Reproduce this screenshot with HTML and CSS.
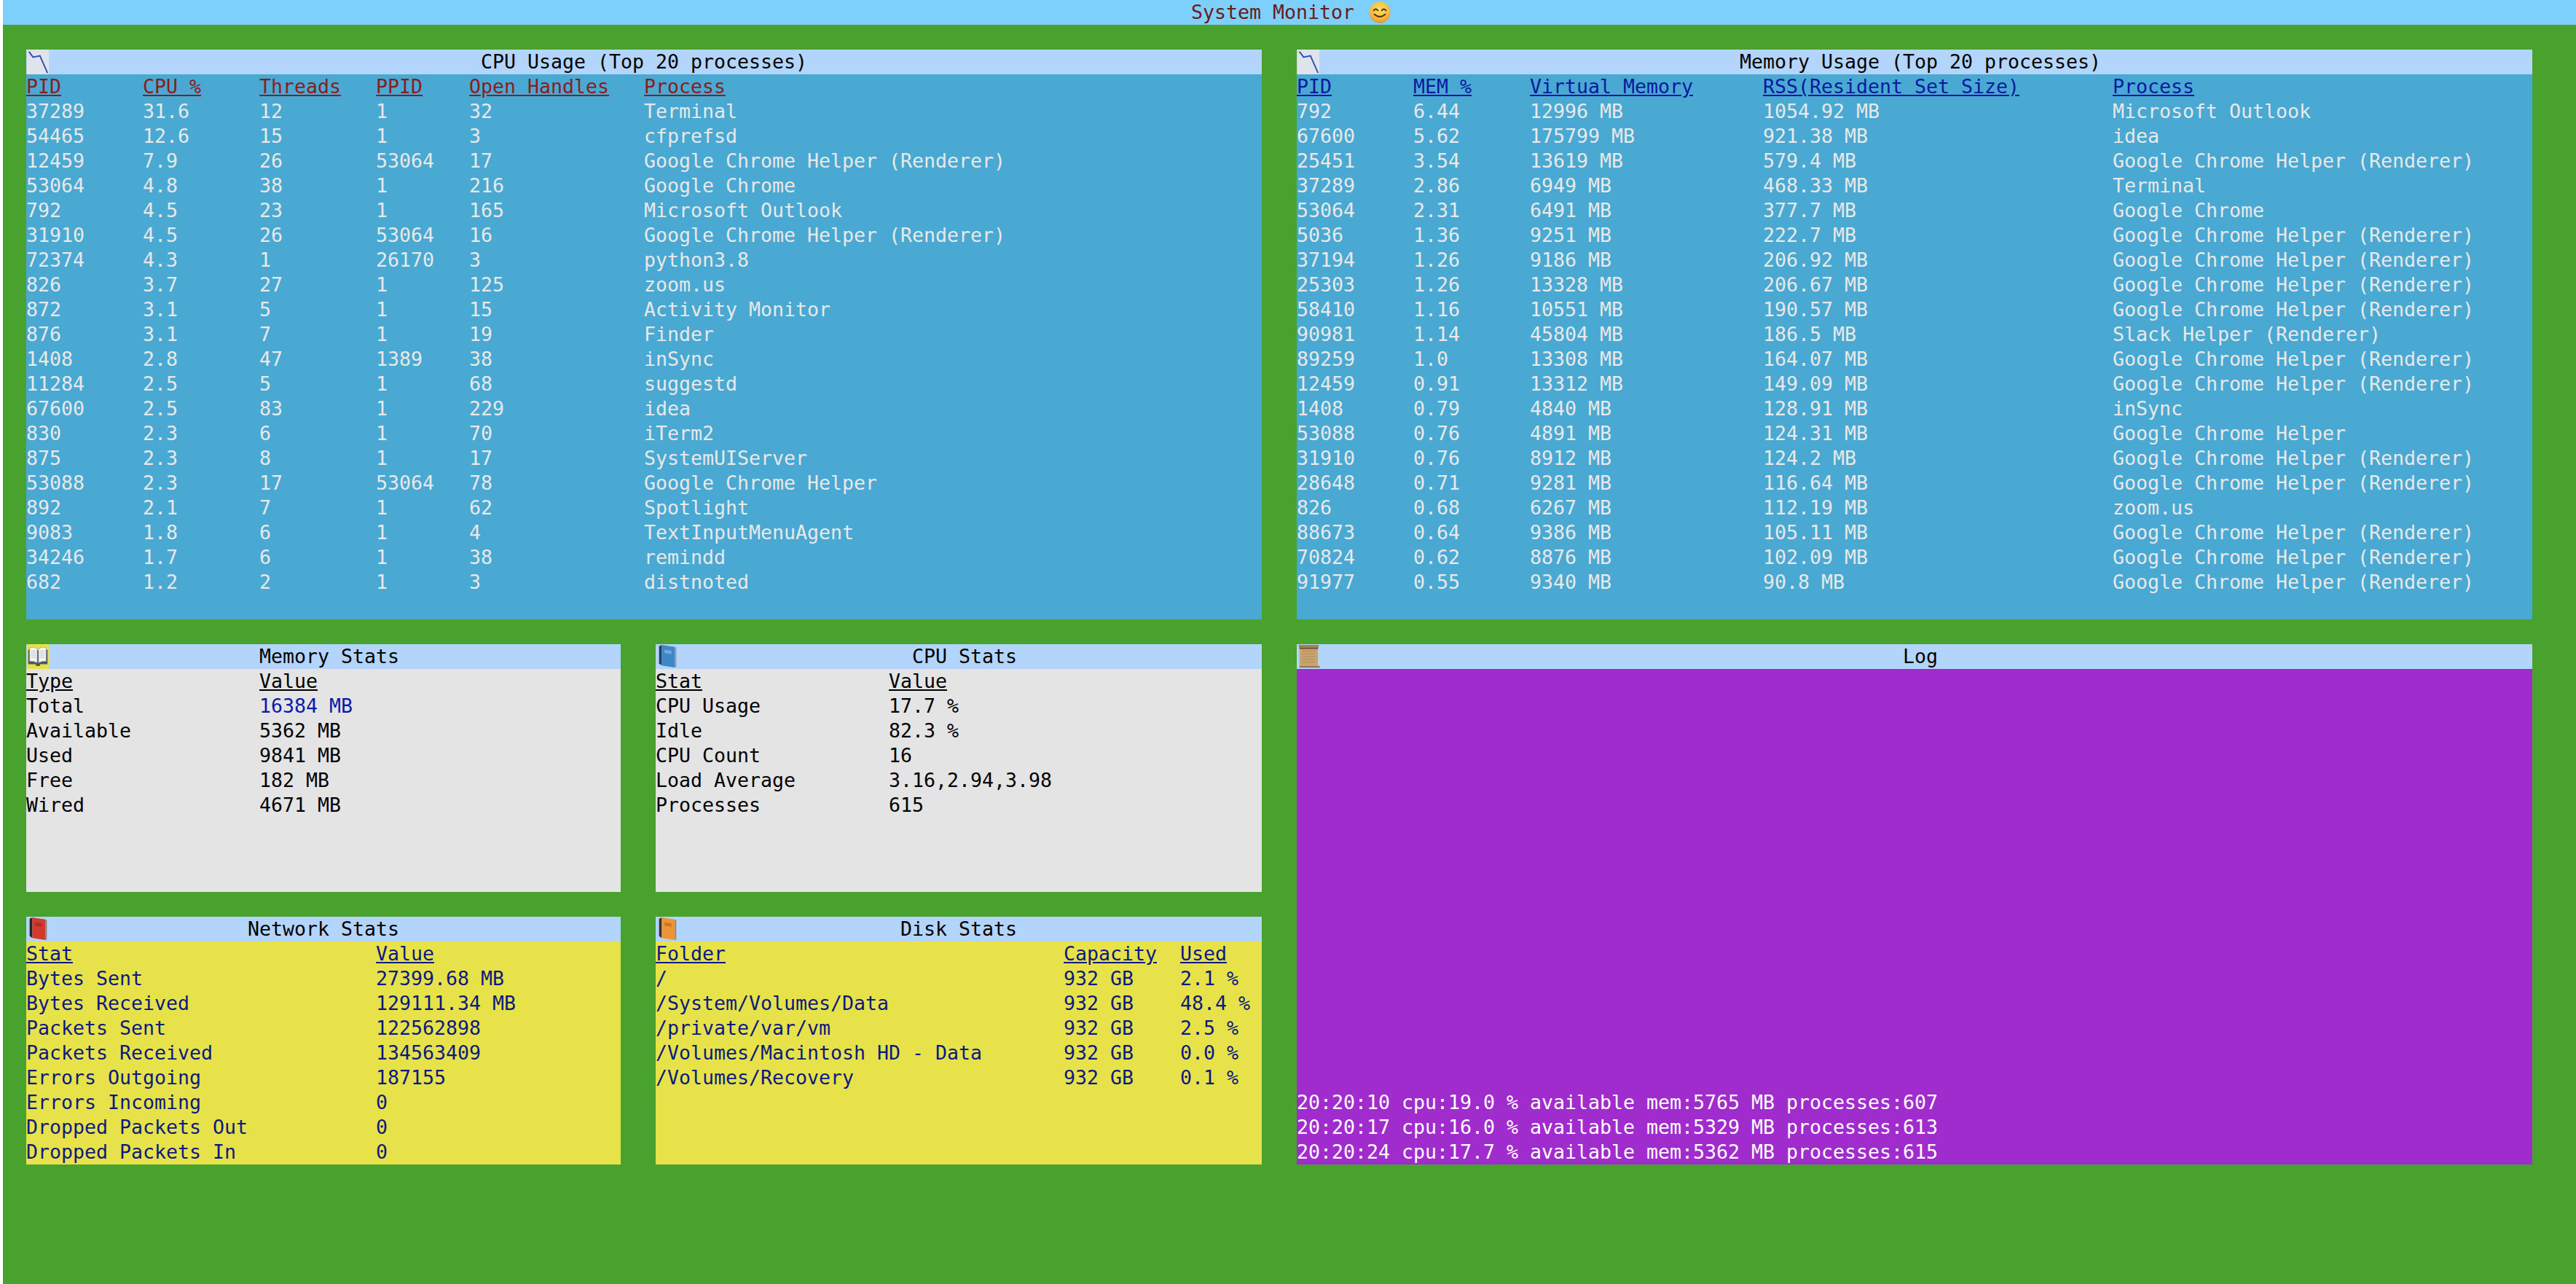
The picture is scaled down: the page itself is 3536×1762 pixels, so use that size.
FILE: index.html
```html
<!DOCTYPE html>
<html lang="en">

<head>
    <meta charset="UTF-8">
    <meta name="viewport" content="width=device-width, initial-scale=1.0">
    <title>System Monitor</title>
    <link rel="stylesheet" href="styles.css">
</head>

<body>
    <div class="screen">

        <header class="titlebar">
            <span>System Monitor</span>
            <svg class="smiley" viewBox="0 0 30 30">
                <defs>
                    <radialGradient id="face" cx="50%" cy="35%" r="70%">
                        <stop offset="0" stop-color="#fde36a" />
                        <stop offset="0.65" stop-color="#f8b83c" />
                        <stop offset="1" stop-color="#e08a22" />
                    </radialGradient>
                </defs>
                <circle cx="15" cy="15" r="14.5" fill="url(#face)" />
                <path d="M6.5 12.5q3-4 6 0M17.5 12.5q3-4 6 0" fill="none" stroke="#5b3410" stroke-width="1.8" stroke-linecap="round" />
                <path d="M7.5 17.5q7.500 7 15 0" fill="none" stroke="#5b3410" stroke-width="1.8" stroke-linecap="round" />
            </svg>
        </header>

        <main class="dash">

            <!-- CPU usage -->
            <section class="panel panel-cpu panel-blue">
                <h2 class="panel-title">
                    <svg class="icon" viewBox="0 0 32 36">
                        <rect x="0" y="0" width="32" height="36" fill="#dfe4ec" />
                        <path d="M3 3l6 8 10-2 11 25" fill="none" stroke="#2a4fb0" stroke-width="2" />
                    </svg>
                    CPU Usage (Top 20 processes)
                </h2>
                <table class="tbl tbl-red">
                    <colgroup>
                        <col class="w160"><col class="w160"><col class="w160"><col class="w128"><col class="w240"><col>
                    </colgroup>
                    <thead>
                        <tr><th>PID</th><th>CPU %</th><th>Threads</th><th>PPID</th><th>Open Handles</th><th>Process</th></tr>
                    </thead>
                    <tbody>
                        <tr><td>37289</td><td>31.6</td><td>12</td><td>1</td><td>32</td><td>Terminal</td></tr>
                        <tr><td>54465</td><td>12.6</td><td>15</td><td>1</td><td>3</td><td>cfprefsd</td></tr>
                        <tr><td>12459</td><td>7.9</td><td>26</td><td>53064</td><td>17</td><td>Google Chrome Helper (Renderer)</td></tr>
                        <tr><td>53064</td><td>4.8</td><td>38</td><td>1</td><td>216</td><td>Google Chrome</td></tr>
                        <tr><td>792</td><td>4.5</td><td>23</td><td>1</td><td>165</td><td>Microsoft Outlook</td></tr>
                        <tr><td>31910</td><td>4.5</td><td>26</td><td>53064</td><td>16</td><td>Google Chrome Helper (Renderer)</td></tr>
                        <tr><td>72374</td><td>4.3</td><td>1</td><td>26170</td><td>3</td><td>python3.8</td></tr>
                        <tr><td>826</td><td>3.7</td><td>27</td><td>1</td><td>125</td><td>zoom.us</td></tr>
                        <tr><td>872</td><td>3.1</td><td>5</td><td>1</td><td>15</td><td>Activity Monitor</td></tr>
                        <tr><td>876</td><td>3.1</td><td>7</td><td>1</td><td>19</td><td>Finder</td></tr>
                        <tr><td>1408</td><td>2.8</td><td>47</td><td>1389</td><td>38</td><td>inSync</td></tr>
                        <tr><td>11284</td><td>2.5</td><td>5</td><td>1</td><td>68</td><td>suggestd</td></tr>
                        <tr><td>67600</td><td>2.5</td><td>83</td><td>1</td><td>229</td><td>idea</td></tr>
                        <tr><td>830</td><td>2.3</td><td>6</td><td>1</td><td>70</td><td>iTerm2</td></tr>
                        <tr><td>875</td><td>2.3</td><td>8</td><td>1</td><td>17</td><td>SystemUIServer</td></tr>
                        <tr><td>53088</td><td>2.3</td><td>17</td><td>53064</td><td>78</td><td>Google Chrome Helper</td></tr>
                        <tr><td>892</td><td>2.1</td><td>7</td><td>1</td><td>62</td><td>Spotlight</td></tr>
                        <tr><td>9083</td><td>1.8</td><td>6</td><td>1</td><td>4</td><td>TextInputMenuAgent</td></tr>
                        <tr><td>34246</td><td>1.7</td><td>6</td><td>1</td><td>38</td><td>remindd</td></tr>
                        <tr><td>682</td><td>1.2</td><td>2</td><td>1</td><td>3</td><td>distnoted</td></tr>
                    </tbody>
                </table>
            </section>

            <!-- memory usage -->
            <section class="panel panel-mem panel-blue">
                <h2 class="panel-title odd">
                    <svg class="icon" viewBox="0 0 32 36">
                        <rect x="0" y="0" width="32" height="36" fill="#dfe4ec" />
                        <path d="M3 3l6 8 10-2 11 25" fill="none" stroke="#2a4fb0" stroke-width="2" />
                    </svg>
                    Memory Usage (Top 20 processes)
                </h2>
                <table class="tbl tbl-navy">
                    <colgroup>
                        <col class="w160"><col class="w160"><col class="w320"><col class="w480"><col>
                    </colgroup>
                    <thead>
                        <tr><th>PID</th><th>MEM %</th><th>Virtual Memory</th><th>RSS(Resident Set Size)</th><th>Process</th></tr>
                    </thead>
                    <tbody>
                        <tr><td>792</td><td>6.44</td><td>12996 MB</td><td>1054.92 MB</td><td>Microsoft Outlook</td></tr>
                        <tr><td>67600</td><td>5.62</td><td>175799 MB</td><td>921.38 MB</td><td>idea</td></tr>
                        <tr><td>25451</td><td>3.54</td><td>13619 MB</td><td>579.4 MB</td><td>Google Chrome Helper (Renderer)</td></tr>
                        <tr><td>37289</td><td>2.86</td><td>6949 MB</td><td>468.33 MB</td><td>Terminal</td></tr>
                        <tr><td>53064</td><td>2.31</td><td>6491 MB</td><td>377.7 MB</td><td>Google Chrome</td></tr>
                        <tr><td>5036</td><td>1.36</td><td>9251 MB</td><td>222.7 MB</td><td>Google Chrome Helper (Renderer)</td></tr>
                        <tr><td>37194</td><td>1.26</td><td>9186 MB</td><td>206.92 MB</td><td>Google Chrome Helper (Renderer)</td></tr>
                        <tr><td>25303</td><td>1.26</td><td>13328 MB</td><td>206.67 MB</td><td>Google Chrome Helper (Renderer)</td></tr>
                        <tr><td>58410</td><td>1.16</td><td>10551 MB</td><td>190.57 MB</td><td>Google Chrome Helper (Renderer)</td></tr>
                        <tr><td>90981</td><td>1.14</td><td>45804 MB</td><td>186.5 MB</td><td>Slack Helper (Renderer)</td></tr>
                        <tr><td>89259</td><td>1.0</td><td>13308 MB</td><td>164.07 MB</td><td>Google Chrome Helper (Renderer)</td></tr>
                        <tr><td>12459</td><td>0.91</td><td>13312 MB</td><td>149.09 MB</td><td>Google Chrome Helper (Renderer)</td></tr>
                        <tr><td>1408</td><td>0.79</td><td>4840 MB</td><td>128.91 MB</td><td>inSync</td></tr>
                        <tr><td>53088</td><td>0.76</td><td>4891 MB</td><td>124.31 MB</td><td>Google Chrome Helper</td></tr>
                        <tr><td>31910</td><td>0.76</td><td>8912 MB</td><td>124.2 MB</td><td>Google Chrome Helper (Renderer)</td></tr>
                        <tr><td>28648</td><td>0.71</td><td>9281 MB</td><td>116.64 MB</td><td>Google Chrome Helper (Renderer)</td></tr>
                        <tr><td>826</td><td>0.68</td><td>6267 MB</td><td>112.19 MB</td><td>zoom.us</td></tr>
                        <tr><td>88673</td><td>0.64</td><td>9386 MB</td><td>105.11 MB</td><td>Google Chrome Helper (Renderer)</td></tr>
                        <tr><td>70824</td><td>0.62</td><td>8876 MB</td><td>102.09 MB</td><td>Google Chrome Helper (Renderer)</td></tr>
                        <tr><td>91977</td><td>0.55</td><td>9340 MB</td><td>90.8 MB</td><td>Google Chrome Helper (Renderer)</td></tr>
                    </tbody>
                </table>
            </section>

            <!-- memory stats -->
            <section class="panel panel-gray">
                <h2 class="panel-title odd">
                    <svg class="icon" viewBox="0 0 32 36">
                        <rect x="0" y="0" width="32" height="36" fill="#e8e24a" />
                        <path d="M2 8l14 1 14-1v21H2z" fill="#4a5560" />
                        <path d="M4 5q7-2 11 2v20q-5-3-11-2z" fill="#f4f4f0" stroke="#8a93a0" stroke-width=".7" />
                        <path d="M28 5q-7-2-11 2v20q5-3 11-2z" fill="#f4f4f0" stroke="#8a93a0" stroke-width=".7" />
                        <path d="M6 10h7M6 13h7M6 16h7M6 19h7M19 10h7M19 13h7M19 16h7M19 19h7" stroke="#b8bec6" stroke-width="1" />
                        <rect x="13" y="29" width="6" height="2.500" fill="#3a4450" />
                    </svg>
                    Memory Stats
                </h2>
                <table class="tbl">
                    <colgroup>
                        <col class="w320"><col>
                    </colgroup>
                    <thead>
                        <tr><th>Type</th><th>Value</th></tr>
                    </thead>
                    <tbody>
                        <tr><td>Total</td><td class="hl">16384 MB</td></tr>
                        <tr><td>Available</td><td>5362 MB</td></tr>
                        <tr><td>Used</td><td>9841 MB</td></tr>
                        <tr><td>Free</td><td>182 MB</td></tr>
                        <tr><td>Wired</td><td>4671 MB</td></tr>
                    </tbody>
                </table>
            </section>

            <!-- cpu stats -->
            <section class="panel panel-gray">
                <h2 class="panel-title odd">
                    <svg class="icon" viewBox="0 0 32 36">
                        <path d="M4 3l4-2v30l-4-3z" fill="#23405f" />
                        <path d="M8 1l19 3v30L8 31z" fill="#3f86c8" />
                        <path d="M12 8l10 1.500v5L12 13z" fill="#76a9d8" />
                        <path d="M27 4l2 1v28l-2 1z" fill="#8a99a8" />
                    </svg>
                    CPU Stats
                </h2>
                <table class="tbl">
                    <colgroup>
                        <col class="w320"><col>
                    </colgroup>
                    <thead>
                        <tr><th>Stat</th><th>Value</th></tr>
                    </thead>
                    <tbody>
                        <tr><td>CPU Usage</td><td>17.7 %</td></tr>
                        <tr><td>Idle</td><td>82.3 %</td></tr>
                        <tr><td>CPU Count</td><td>16</td></tr>
                        <tr><td>Load Average</td><td>3.16,2.94,3.98</td></tr>
                        <tr><td>Processes</td><td>615</td></tr>
                    </tbody>
                </table>
            </section>

            <!-- log -->
            <section class="panel panel-log">
                <h2 class="panel-title odd">
                    <svg class="icon" viewBox="0 0 32 36">
                        <rect x="3" y="3" width="27" height="31" fill="#c9a473" />
                        <path d="M7 10h19M7 14h19M7 18h19M7 22h19M7 26h19" stroke="#b08a5c" stroke-width="1" />
                        <rect x="2" y="1" width="29" height="4" rx="1" fill="#a67f52" />
                        <rect x="3" y="5" width="27" height="2" fill="#6e5236" />
                        <rect x="3" y="32" width="30" height="2" rx="1" fill="#8a6a45" />
                    </svg>
                    Log
                </h2>
                <div class="log-body">
                    <div>20:20:10 cpu:19.0 % available mem:5765 MB processes:607</div>
                    <div>20:20:17 cpu:16.0 % available mem:5329 MB processes:613</div>
                    <div>20:20:24 cpu:17.7 % available mem:5362 MB processes:615</div>
                </div>
            </section>

            <!-- network stats -->
            <section class="panel panel-yellow">
                <h2 class="panel-title">
                    <svg class="icon" viewBox="0 0 32 36">
                        <path d="M4 3l4-2v30l-4-3z" fill="#2b2526" />
                        <path d="M8 1l19 3v30L8 31z" fill="#d23a2e" />
                        <path d="M12 8l10 1.500v5L12 13z" fill="#b52c24" />
                        <path d="M27 4l2 1v28l-2 1z" fill="#8c7f7a" />
                    </svg>
                    Network Stats
                </h2>
                <table class="tbl">
                    <colgroup>
                        <col class="w480"><col>
                    </colgroup>
                    <thead>
                        <tr><th>Stat</th><th>Value</th></tr>
                    </thead>
                    <tbody>
                        <tr><td>Bytes Sent</td><td>27399.68 MB</td></tr>
                        <tr><td>Bytes Received</td><td>129111.34 MB</td></tr>
                        <tr><td>Packets Sent</td><td>122562898</td></tr>
                        <tr><td>Packets Received</td><td>134563409</td></tr>
                        <tr><td>Errors Outgoing</td><td>187155</td></tr>
                        <tr><td>Errors Incoming</td><td>0</td></tr>
                        <tr><td>Dropped Packets Out</td><td>0</td></tr>
                        <tr><td>Dropped Packets In</td><td>0</td></tr>
                    </tbody>
                </table>
            </section>

            <!-- disk stats -->
            <section class="panel panel-yellow">
                <h2 class="panel-title">
                    <svg class="icon" viewBox="0 0 32 36">
                        <path d="M4 3l4-2v30l-4-3z" fill="#3a3230" />
                        <path d="M8 1l19 3v30L8 31z" fill="#ec9436" />
                        <path d="M12 8l10 1.500v5L12 13z" fill="#c9762a" />
                        <path d="M27 4l2 1v28l-2 1z" fill="#8f8578" />
                    </svg>
                    Disk Stats
                </h2>
                <table class="tbl">
                    <colgroup>
                        <col class="w560"><col class="w160"><col>
                    </colgroup>
                    <thead>
                        <tr><th>Folder</th><th>Capacity</th><th>Used</th></tr>
                    </thead>
                    <tbody>
                        <tr><td>/</td><td>932 GB</td><td>2.1 %</td></tr>
                        <tr><td>/System/Volumes/Data</td><td>932 GB</td><td>48.4 %</td></tr>
                        <tr><td>/private/var/vm</td><td>932 GB</td><td>2.5 %</td></tr>
                        <tr><td>/Volumes/Macintosh HD - Data</td><td>932 GB</td><td>0.0 %</td></tr>
                        <tr><td>/Volumes/Recovery</td><td>932 GB</td><td>0.1 %</td></tr>
                    </tbody>
                </table>
            </section>

        </main>
    </div>
</body>

</html>
```

FILE: styles.css
```css
/* every character cell is 16 x 34 */
html,
body {
    margin: 0;
    height: 100%;
    background: #fff;
}

body {
    font-family: "DejaVu Sans Mono", monospace;
    font-size: 26.58px;
    line-height: 34px;
    color: #000;
}

.screen {
    margin-left: 4px;
    height: 100%;
    display: flex;
    flex-direction: column;
    background: #4aa22e;
}

.titlebar {
    flex: none;
    height: 34px;
    padding-left: 4px;
    background: #7dd0fc;
    color: #6b1a1a;
    display: flex;
    justify-content: center;
    align-items: center;
    gap: 20px;
}

.smiley {
    width: 30px;
    height: 30px;
}

.dash {
    display: grid;
    grid-template-columns: 816px 832px 1696px;
    grid-template-rows: 782px 340px 340px;
    column-gap: 48px;
    row-gap: 34px;
    padding: 34px 0 0 32px;
}

.panel {
    display: flex;
    flex-direction: column;
    overflow: hidden;
    white-space: nowrap;
}

.panel-cpu {
    grid-column: 1 / 3;
}

.panel-mem {
    grid-column: 3;
}

.panel-log {
    grid-column: 3;
    grid-row: 2 / 4;
    background: #a02ccd;
    color: #fff;
}

.panel-blue {
    background: #4aa9d2;
    color: #e8e8e8;
}

.panel-gray {
    background: #e4e4e4;
}

.panel-yellow {
    background: #e8e24a;
    color: #0a1a80;
}

.panel-title {
    position: relative;
    flex: none;
    height: 34px;
    margin: 0;
    font: inherit;
    color: #000;
    background: #b4d5fb;
    text-align: center;
}

/* terminal rounds an odd remainder to the right */
.panel-title.odd {
    padding-left: 16px;
}

.icon {
    position: absolute;
    left: 0;
    top: 0;
    width: 32px;
    height: 34px;
}

.tbl {
    width: 100%;
    table-layout: fixed;
    border-collapse: collapse;
}

.tbl th,
.tbl td {
    padding: 0;
    height: 34px;
    text-align: left;
    font-weight: normal;
    overflow: visible;
}

.tbl th {
    text-decoration: underline;
}

.tbl-red th {
    color: #8a1c1c;
}

.tbl-navy th {
    color: #0a1aa0;
}

.hl {
    color: #0a1aa8;
}

.w128 { width: 128px; }
.w160 { width: 160px; }
.w240 { width: 240px; }
.w320 { width: 320px; }
.w480 { width: 480px; }
.w560 { width: 560px; }

.log-body {
    flex: 1;
    display: flex;
    flex-direction: column;
    justify-content: flex-end;
}
```
